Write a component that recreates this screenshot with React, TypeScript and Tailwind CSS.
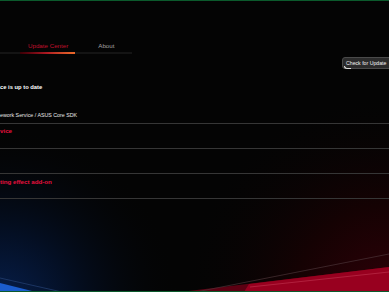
const sections = [
  { title: "vice", gap: "mt-[3px]" },
  { title: "", gap: "" },
  { title: "ting effect add-on", gap: "mt-[4px]" },
];

function Backdrop() {
  return (
    <svg
      className="absolute inset-0"
      width="389"
      height="292"
      viewBox="0 0 389 292"
    >
      <defs>
        <radialGradient id="blueGlow" cx="0" cy="305" r="180" gradientUnits="userSpaceOnUse">
          <stop offset="0" stopColor="#071f4c" />
          <stop offset="0.4" stopColor="#040f24" />
          <stop offset="1" stopColor="#040404" stopOpacity="0" />
        </radialGradient>
        <radialGradient id="redGlow" cx="389" cy="300" r="210" gradientUnits="userSpaceOnUse">
          <stop offset="0" stopColor="#300008" />
          <stop offset="0.45" stopColor="#150203" />
          <stop offset="1" stopColor="#040404" stopOpacity="0" />
        </radialGradient>
      </defs>
      <rect x="0" y="0" width="389" height="292" fill="#040404" />
      <rect x="0" y="90" width="389" height="202" fill="url(#redGlow)" />
      <rect x="0" y="90" width="389" height="202" fill="url(#blueGlow)" />
      <polygon points="0,283 36,292 0,292" fill="#1b5ccc" />
      <line x1="0" y1="278" x2="62" y2="292" stroke="#2b4a80" strokeWidth="0.6" />
      <polygon points="180,292 389,267 389,292" fill="#5c0012" />
      <polygon points="244,292 249,284 389,267 389,292" fill="#98001f" />
      <line x1="250" y1="287" x2="389" y2="272" stroke="#c23553" strokeWidth="0.6" />
      <line x1="196" y1="292" x2="389" y2="254" stroke="#4a3438" strokeWidth="0.7" />
    </svg>
  );
}

export default function App() {
  return (
    <div
      className="relative h-[292px] w-[389px] overflow-hidden bg-[#040404]"
      style={{ fontFamily: '"Liberation Sans", Arial, sans-serif' }}
    >
      <Backdrop />
      <div className="relative flex h-full flex-col border-t border-b border-[#0b5a2c]">
        <div className="mt-[41px] flex h-[8px] items-center text-[6.2px] leading-[8px]">
          <span className="ml-[28px] text-[#c0102c]">Update Center</span>
          <span className="ml-[30px] text-[#a2a2a2]">About</span>
        </div>

        <div className="mt-[2px] h-[2px] w-[132px] bg-[#141414]">
          <div className="ml-[20px] h-[2px] w-[55px] bg-gradient-to-r from-[#3a0006] via-[#b01a22] to-[#ec6a2a]" />
        </div>

        <div className="ml-[342px] mt-[3px] w-[52px]">
          <div className="relative h-[12px] rounded-[3px] border border-[#4a4a4a] bg-[#2b2b2b] pl-[3px] text-[5.2px] leading-[10px] text-[#f2f2f2]">
            Check for Update
            <span className="absolute bottom-[-1px] left-[1px] h-[3px] w-[7px] rounded-bl-[4px] border-b border-l border-[#dcdcdc]" />
          </div>
        </div>

        <div className="mt-[14px] h-[8px] text-[5.8px] font-bold leading-[8px] text-white">
          ce is up to date
        </div>
        <div className="mt-[20px] h-[8px] text-[5.3px] leading-[8px] text-[#e8e8e8]">
          ework Service / ASUS Core SDK
        </div>
        <div className="mt-[4px] border-t border-[#363636]" />

        {sections.map((s, i) => (
          <div key={i} className="flex flex-col">
            {s.title ? (
              <div className={`${s.gap} h-[8px] text-[6.2px] font-bold leading-[8px] text-[#e8103e]`}>
                {s.title}
              </div>
            ) : null}
            <div
              className={
                i === 0
                  ? "mt-[13px] border-t border-[#363636]"
                  : i === 1
                  ? "mt-[24px] border-t border-[#363636]"
                  : "mt-[12px] border-t border-[#363636]"
              }
            />
          </div>
        ))}
      </div>
    </div>
  );
}
